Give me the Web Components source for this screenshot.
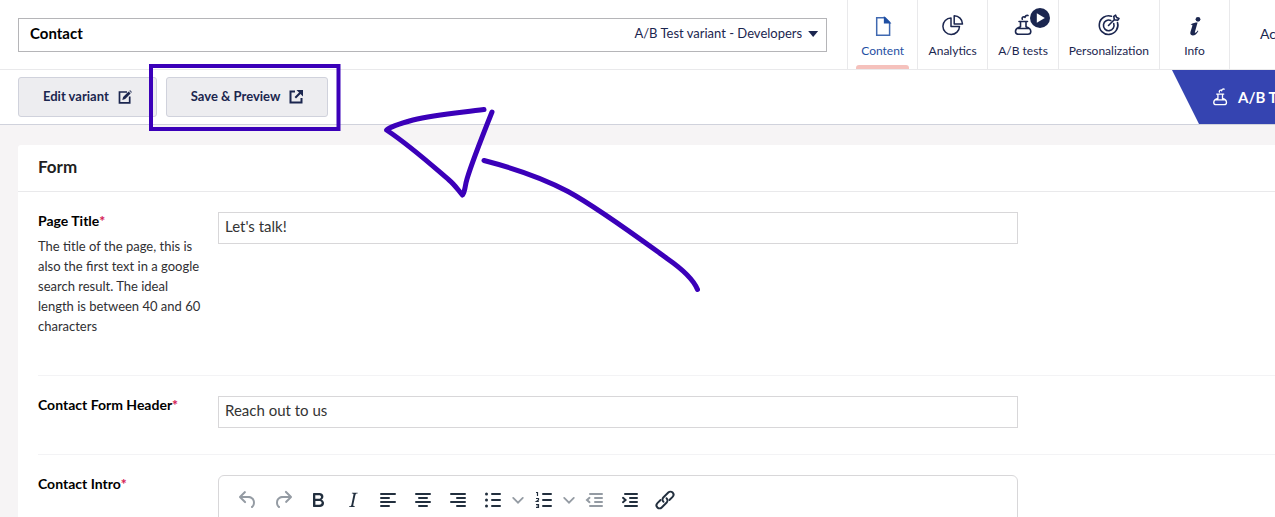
<!DOCTYPE html>
<html lang="en">
<head>
<meta charset="utf-8">
<title>Contact</title>
<style>
html, body { margin: 0; height: 100%; overflow: hidden; }
body { font-family: Lato, "Liberation Sans", sans-serif; font-size: 15px; line-height: 20px; color: #1b264f; background: #f6f4f5; position: relative; }
</style>
</head>
<body>
<content-editor></content-editor>

<script>
const ICONS = {
  document: ['0 0 24 24', '<g fill="none" stroke="#1f4fa3" stroke-width="1.5"><path d="M5.7 4.700H14l4.600 4.600v13H5.700z" stroke-opacity=".85"/><path d="M13.600 4.700v5h5z" fill="#1f4fa3"/></g>'],
  chart: ['0 0 24 24', '<g fill="none" stroke="currentColor" stroke-width="1.5" stroke-linejoin="round"><path d="M10 4.900a8.300 8.300 0 1 0 8.500 8.500H10z"/><path d="M13.200 2.700v8.200h8.300a8.300 8.300 0 0 0-8.300-8.200z"/></g>'],
  flask: ['0 0 24 24', '<g fill="none" stroke="currentColor" stroke-width="1.6" stroke-linecap="round" stroke-linejoin="round"><path d="M8 8.500h8.500M9.500 8.500v5.300c-3 .8-5 2.500-5 4.700 0 1.800 1.200 2.700 3 2.700h9.300c1.800 0 3-.9 3-2.700 0-2.200-2-3.900-4.800-4.700V8.500M6.500 15.500h11.300M11.300 6.200c-.6-1.500.6-2.700 2-2.300M14 4.500c.2-1.600 1.300-2.400 3-2"/></g>'],
  target: ['0 0 24 24', '<g fill="none" stroke="currentColor" stroke-width="1.6" stroke-linecap="round" stroke-linejoin="round"><path d="M14.500 3.300a9.300 9.300 0 1 0 6 6.200M13.800 7.500a5.300 5.300 0 1 0 2.900 3M11.500 12.500l6-6M17.300 6.700l-.5-3.300 1.800-1.200 1 2.300 2.400 1-1.300 1.700z"/></g>'],
  info: ['0 0 24 24', '<circle cx="15" cy="6.300" r="2.400" fill="currentColor"/><path fill="currentColor" d="M8 11.300c2-1.300 4-1.800 6.600-1.800l-2.700 9.400c-.3 1.100.4 1 1 .6.700-.5 1.200-1.200 1.800-2.100l.7.500c-1.800 3-3.500 4.500-5.700 4.500-2.200 0-2.800-1.500-2.200-3.600l1.800-5.900c.3-1.100-.2-1.300-1.500-1z"/>'],
  play: ['0 0 20 20', '<circle cx="10" cy="10" r="10" fill="currentColor"/><path d="M6.800 5.200v9.600l8-4.800z" fill="#fff"/>'],
  edit: ['0 0 14 14', '<path d="M9 2H1.500v10.800h10.200V6.500" fill="none" stroke="currentColor" stroke-width="1.700"/><path d="M4.300 10l.8-3 5.500-5.500 2 2L7.200 9.100z" fill="currentColor"/><path d="M11.200.9l.9-.9 2 2-.9.9z" fill="currentColor" opacity=".7"/>'],
  open: ['0 0 14 14', '<path d="M6 1.500H1.500v11h11V8M6.300 7.700l5-5" fill="none" stroke="currentColor" stroke-width="2"/><path d="M7.500 0H14v6.500z" fill="currentColor"/>'],
  undo: ['0 0 24 24', '<path fill="currentColor" d="M6.400 8H12c3.700 0 6.200 2 6.800 5.100.6 2.700-.4 5.600-2.300 6.800a1 1 0 0 1-1-1.800c1.100-.6 1.800-2.700 1.400-4.600-.5-2.100-2.100-3.500-4.900-3.500H6.400l3.300 3.300a1 1 0 1 1-1.400 1.400l-5-5a1 1 0 0 1 0-1.400l5-5a1 1 0 0 1 1.400 1.400z"/>'],
  redo: ['0 0 24 24', '<path fill="currentColor" d="M17.600 10H12c-2.800 0-4.400 1.400-4.900 3.500-.4 2 .3 4 1.400 4.600a1 1 0 1 1-1 1.800c-2-1.200-2.900-4.100-2.300-6.800.6-3 3-5.100 6.800-5.100h5.600l-3.300-3.300a1 1 0 1 1 1.400-1.400l5 5a1 1 0 0 1 0 1.400l-5 5a1 1 0 0 1-1.400-1.400z"/>'],
  bold: ['0 0 24 24', '<path fill="currentColor" d="M7.800 19c-.3 0-.5 0-.6-.2l-.2-.5V5.700c0-.2 0-.4.2-.5l.6-.2h5c1.500 0 2.700.3 3.500 1 .7.6 1.100 1.400 1.100 2.500a3 3 0 0 1-.6 1.900c-.4.6-1 1-1.600 1.200.4.100.9.300 1.300.6s.8.700 1 1.200c.4.400.5 1 .5 1.600 0 1.300-.4 2.300-1.300 3-.8.700-2.100 1-3.800 1zm5-8.300c.6 0 1.200-.1 1.600-.5.400-.3.600-.7.600-1.300 0-1.100-.8-1.700-2.300-1.700H9.300v3.500zm.5 6c.7 0 1.300-.1 1.700-.4.400-.4.600-.9.600-1.500s-.2-1-.7-1.400c-.4-.3-1-.4-2-.4H9.400v3.700z"/>'],
  italic: ['0 0 24 24', '<path fill="currentColor" d="m16.700 4.700-.1.900h-.3c-.6 0-1 0-1.400.3-.3.300-.4.600-.5 1.100l-2.100 9.800v.6c0 .5.4.8 1.400.8h.2l-.2.800H8l.2-.8h.2c1.100 0 1.800-.5 2-1.500l2-9.800.1-.5c0-.6-.4-.8-1.400-.8h-.3l.2-.9z"/>'],
  left: ['0 0 24 24', '<path stroke="currentColor" stroke-width="2" stroke-linecap="round" d="M5 6h14M5 10h8M5 14h14M5 18h8"/>'],
  center: ['0 0 24 24', '<path stroke="currentColor" stroke-width="2" stroke-linecap="round" d="M5 6h14M8 10h8M5 14h14M8 18h8"/>'],
  right: ['0 0 24 24', '<path stroke="currentColor" stroke-width="2" stroke-linecap="round" d="M5 6h14M11 10h8M5 14h14M11 18h8"/>'],
  bullets: ['0 0 24 24', '<path stroke="currentColor" stroke-width="2" stroke-linecap="round" d="M11 6h8M11 12h8M11 18h8"/><g fill="currentColor"><circle cx="5.500" cy="6" r="1.500"/><circle cx="5.500" cy="12" r="1.500"/><circle cx="5.500" cy="18" r="1.500"/></g>'],
  numbers: ['0 0 24 24', '<path stroke="currentColor" stroke-width="2" stroke-linecap="round" d="M11 6h8M11 12h8M11 18h8"/><path fill="none" stroke="currentColor" stroke-width="1.200" d="M4 4.500h1.500V8M4 10.500h2.500V12L4.500 13.500h2.300M4 16.500h2.500v3H4M4.500 18h2"/>'],
  outdent: ['0 0 24 24', '<path fill="none" stroke="currentColor" stroke-width="2" stroke-linecap="round" d="M7 6h12M12 10h7M12 14h7M7 18h12M6.500 9.800L4 12l2.500 2.200"/>'],
  indent: ['0 0 24 24', '<path fill="none" stroke="currentColor" stroke-width="2" stroke-linecap="round" d="M7 6h12M12 10h7M12 14h7M7 18h12M5 9.800L7.500 12 5 14.200"/>'],
  link: ['0 0 24 24', '<g fill="none" stroke="currentColor" stroke-width="1.900" stroke-linecap="round"><path d="M10.500 13.800a3 3 0 0 1-.2-4.300l5-5a3 3 0 0 1 4.300 4.300l-3.200 3.200"/><path d="M13.500 10.200a3 3 0 0 1 .2 4.300l-5 5a3 3 0 0 1-4.300-4.300L7.600 12"/></g>'],
  chevron: ['0 0 10 10', '<path d="M1 3.200l4 4 4-4" fill="none" stroke="currentColor" stroke-width="1.500" stroke-linecap="round"/>']
};

function define(name, build) {
  customElements.define(name, class extends HTMLElement {
    constructor() { super(); this.attachShadow({ mode: 'open' }); }
    connectedCallback() {
      const t = document.createElement('template');
      t.innerHTML = '<style>*{box-sizing:border-box}button,input,select{font:inherit;color:inherit;margin:0}</style>' + build(this);
      this.shadowRoot.replaceChildren(t.content.cloneNode(true));
    }
  });
}
const attr = (el, n) => el.getAttribute(n) || '';

define('ui-icon', el => {
  const [box, art] = ICONS[attr(el, 'name')];
  return `<style>:host{display:block;flex:none;width:24px;height:24px}svg{display:block;width:100%;height:100%}</style>
  <svg viewBox="${box}" aria-hidden="true">${art}</svg>`;
});

define('name-field', () => `
<style>
:host{display:block;flex:1;min-width:0}
.box{display:flex;height:34px;border:1px solid #b5b5b8;background:#fff}
input{flex:1;min-width:0;border:0;padding:0 0 4px 11px;background:none;font-weight:700;color:#000;outline:0}
label{display:flex;align-items:center;gap:6px;padding-right:8px;padding-bottom:2px}
select{appearance:none;border:0;background:none;padding:0 0 2px;width:200px;text-align-last:right;font-size:13px;color:#1b264f}
i{width:10px;height:6px;background:#1b264f;clip-path:polygon(0 0,100% 0,50% 100%)}
</style>
<div class="box"><input aria-label="Name" value="Contact">
<label><select aria-label="Variant"><option>A/B Test variant - Developers</option></select><i></i></label></div>`);

define('app-tab', el => `
<style>
:host{display:block;flex:none}
button{position:relative;display:flex;flex-direction:column;align-items:center;gap:4px;min-width:70px;height:100%;padding:13px 10px 0;border:0;border-left:1px solid #e9e9eb;background:none;font-size:12px;line-height:20px;white-space:nowrap}
:host([active]) button{color:#1f4fa3}
:host([active]) button::after{content:"";position:absolute;left:8px;right:8px;bottom:0;height:4px;background:#f5c1bc;border-radius:3px 3px 0 0}
::slotted(ui-icon){position:absolute;right:8px;top:8px;width:20px;height:20px;color:#1b264f}
</style>
<button type="button"><ui-icon name="${attr(el, 'icon')}"></ui-icon><span>${attr(el, 'label')}</span><slot></slot></button>`);

define('editor-header', () => `
<style>
:host{display:flex;height:70px;border-bottom:1px solid #e9e9eb;background:#fff;padding-left:18px;overflow:hidden}
name-field{margin:18px 20px 0 0}
nav{display:flex}
.actions{flex:none;width:46px;border:0;border-left:1px solid #e9e9eb;background:none;padding:0 0 2px 30px;text-align:left;font-size:14px;overflow:hidden;white-space:nowrap}
</style>
<name-field></name-field>
<nav>
<app-tab icon="document" label="Content" active></app-tab>
<app-tab icon="chart" label="Analytics"></app-tab>
<app-tab icon="flask" label="A/B tests"><ui-icon name="play"></ui-icon></app-tab>
<app-tab icon="target" label="Personalization"></app-tab>
<app-tab icon="info" label="Info"></app-tab>
</nav>
<button class="actions" type="button">Actions</button>`);

define('tool-button', el => `
<style>
:host{display:block;flex:none}
button{display:flex;align-items:center;gap:9px;height:40px;padding:0 24px;border:1px solid #d0d2dc;border-radius:3px;background:#ededf0;font-size:13px;font-weight:700;white-space:nowrap}
span{padding-bottom:2px}
ui-icon{width:14px;height:14px}
</style>
<button type="button"><span><slot></slot></span><ui-icon name="${attr(el, 'icon')}"></ui-icon></button>`);

define('editor-toolbar', () => `
<style>
:host{display:flex;height:55px;border-bottom:1px solid #d0d2dc;background:#fff;padding-left:18px;overflow:hidden}
.tools{display:flex;gap:9px;padding-top:7px;flex:1}
.ribbon{flex:none;width:103px;display:flex;align-items:center;gap:8px;padding-left:38px;background:#3544b1;color:#fff;font-weight:700;font-size:15px;clip-path:polygon(0 0,100% 0,100% 100%,27px 100%);white-space:nowrap;overflow:hidden}
.ribbon ui-icon{width:20px;height:20px}
</style>
<div class="tools"><tool-button icon="edit">Edit variant</tool-button><tool-button icon="open">Save &amp; Preview</tool-button></div>
<div class="ribbon"><ui-icon name="flask"></ui-icon><span>A/B Test</span></div>`);

define('form-row', el => `
<style>
:host{display:flex;gap:12px;margin-left:20px;padding:20px 0 26px;border-bottom:1px solid #f3f3f5}
.label{width:168px;flex:none;padding-bottom:13px}
label{display:block;font-size:14px;font-weight:700;color:#000;line-height:18px;white-space:nowrap}
b{color:#d42054}
p{margin:6px 0 0;font-size:13px;line-height:20px;color:#303033}
.field{flex:1;min-width:0;max-width:800px}
input{display:block;width:100%;height:32px;border:1px solid #d8d7d9;padding:0 6px 4px;background:#fff;color:#343434;outline:0}
</style>
<div class="label"><label for="f">${attr(el, 'label')}<b>*</b></label>${el.hasAttribute('hint') ? `<p>${attr(el, 'hint')}</p>` : ''}</div>
<div class="field">${el.hasAttribute('value') ? `<input id="f" value="${attr(el, 'value')}">` : '<slot></slot>'}</div>`);

define('rich-text', () => {
  const b = (n, t, c = '') => `<button type="button" title="${t}" class="${c}"><ui-icon name="${n}"></ui-icon></button>`;
  return `
<style>
:host{display:block;min-height:260px;border:1px solid #d8d7d9;border-radius:6px 6px 0 0}
.bar{display:flex;gap:1px;padding:7px 12px}
button{display:flex;align-items:center;justify-content:center;width:34px;height:34px;padding:0;border:0;background:none;color:#222f3e}
.off{color:#949ba3}
.more{width:16px;margin-left:-1px;color:#949ba3}
.more ui-icon{width:12px;height:12px}
</style>
<div class="bar" role="toolbar">${b('undo', 'Undo', 'off')}${b('redo', 'Redo', 'off')}${b('bold', 'Bold')}${b('italic', 'Italic')}${b('left', 'Align left')}${b('center', 'Align center')}${b('right', 'Align right')}${b('bullets', 'Bullet list')}${b('chevron', 'Bullet styles', 'more')}${b('numbers', 'Numbered list')}${b('chevron', 'Number styles', 'more')}${b('outdent', 'Decrease indent', 'off')}${b('indent', 'Increase indent')}${b('link', 'Link')}</div>`;
});

define('form-card', () => `
<style>
:host{display:block;margin:20px 0 0 18px;background:#fff;border-radius:3px 0 0 0}
h2{margin:0;height:47px;padding:0 20px 2px;border-bottom:1px solid #e9e9eb;font-size:17px;line-height:44px;font-weight:700;color:#1f1f23}
</style>
<h2>Form</h2><slot></slot>`);

define('hand-annotation', () => `
<style>
:host{display:block;position:absolute;left:0;top:0;pointer-events:none}
svg{display:block}
</style>
<svg width="720" height="310" viewBox="0 0 720 310" fill="none" stroke="#3b00b9" stroke-linecap="round" stroke-linejoin="round" aria-hidden="true">
<path d="M151 66h187.500v63H151z" stroke-width="4" stroke-linejoin="miter"/>
<g stroke-width="5"><path d="M484 109.500c-27 3.500-49 5-71 10.500-11 3-22 6-26.500 10C412 147 436 169 449 180c6 5 9 10 13.500 15 3-4 2-8 4.500-16 5-17 15-42 25-67"/>
<path d="M484 160.500c27 7 58 17 84 31 31 17 70 46 99 67 13 9 26 20 30.500 31"/></g>
</svg>`);

define('content-editor', () => `
<style>:host{display:flex;flex-direction:column;height:100%}
main{flex:1;min-height:0;overflow:hidden}editor-header,editor-toolbar{flex:none}</style>
<editor-header></editor-header>
<editor-toolbar></editor-toolbar>
<main><form-card>
<form-row label="Page Title" value="Let's talk!" hint="The title of the page, this is also the first text in a google search result. The ideal length is between 40 and 60 characters"></form-row>
<form-row label="Contact Form Header" value="Reach out to us"></form-row>
<form-row label="Contact Intro"><rich-text></rich-text></form-row>
</form-card></main>
<hand-annotation></hand-annotation>`);
</script>
</body>
</html>
